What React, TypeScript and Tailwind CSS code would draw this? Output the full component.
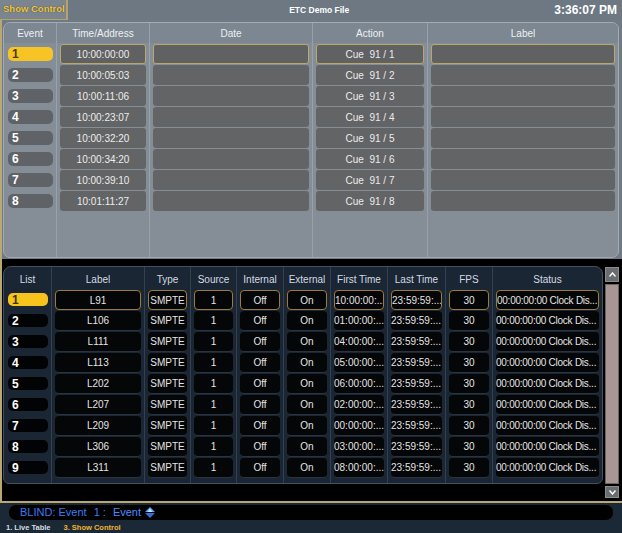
import React from 'react'

const FONT = { fontFamily: '"Liberation Sans", Arial, sans-serif' }

const events = [
  { n: 1, time: '10:00:00:00', action: 'Cue  91 / 1' },
  { n: 2, time: '10:00:05:03', action: 'Cue  91 / 2' },
  { n: 3, time: '10:00:11:06', action: 'Cue  91 / 3' },
  { n: 4, time: '10:00:23:07', action: 'Cue  91 / 4' },
  { n: 5, time: '10:00:32:20', action: 'Cue  91 / 5' },
  { n: 6, time: '10:00:34:20', action: 'Cue  91 / 6' },
  { n: 7, time: '10:00:39:10', action: 'Cue  91 / 7' },
  { n: 8, time: '10:01:11:27', action: 'Cue  91 / 8' },
]

const lists = [
  { n: 1, label: 'L91', first: '10:00:00:...' },
  { n: 2, label: 'L106', first: '01:00:00:...' },
  { n: 3, label: 'L111', first: '04:00:00:...' },
  { n: 4, label: 'L113', first: '05:00:00:...' },
  { n: 5, label: 'L202', first: '06:00:00:...' },
  { n: 6, label: 'L207', first: '02:00:00:...' },
  { n: 7, label: 'L209', first: '00:00:00:...' },
  { n: 8, label: 'L306', first: '03:00:00:...' },
  { n: 9, label: 'L311', first: '08:00:00:...' },
]

const TOP_HEAD = ['Event', 'Time/Address', 'Date', 'Action', 'Label']
const BOTTOM_HEAD = ['List', 'Label', 'Type', 'Source', 'Internal', 'External', 'First Time', 'Last Time', 'FPS', 'Status']

function TopCell({ sel, last, children }: { sel: boolean; last?: boolean; children?: React.ReactNode }) {
  return (
    <div className={`h-[21px] px-[3px] pt-px ${last ? '' : 'border-r border-[#98a1a9]'}`}>
      <div
        className={`h-[20px] flex items-center justify-center text-[10px] text-[#ececec] rounded-[3px] whitespace-pre ${
          sel ? 'bg-[#606163] border border-[#b9a76c]' : 'bg-[#636466]'
        }`}
      >
        {children}
      </div>
    </div>
  )
}

function BotCell({ sel, last, children, className = '' }: { sel: boolean; last?: boolean; children?: React.ReactNode; className?: string }) {
  return (
    <div className={`h-[21px] px-[3px] pt-px ${last ? '' : 'border-r border-[#33414f]'}`}>
      <div
        className={`h-[20px] flex items-center justify-center text-[10px] text-[#e4e4e4] rounded-[4px] bg-[#050607] overflow-hidden whitespace-nowrap ${
          sel ? 'border border-[#9c7b3c]' : 'border-b border-[#2a3440]'
        } ${className}`}
      >
        {children}
      </div>
    </div>
  )
}

export default function App() {
  return (
    <div className="w-[622px] h-[533px] bg-black overflow-hidden flex flex-col select-none" style={FONT}>
      {/* Title bar */}
      <div className="h-[20px] bg-[#6d7883] flex items-center shrink-0">
        <div className="h-full w-[68px] bg-[#7b858f] border-r-2 border-b border-[#b4a36a] flex items-center pl-[3px] whitespace-nowrap">
          <span className="text-[9.5px] font-bold text-[#f0c84a] [text-shadow:0_0_1px_#3a3020]">Show Control</span>
        </div>
        <div className="flex-1 text-center text-[8.5px] font-bold text-white pl-[16px]">ETC Demo File</div>
        <div className="text-[12px] font-bold text-white pr-[5px]">3:36:07 PM</div>
      </div>

      {/* Upper section */}
      <div className="h-[239px] bg-[#6f7a85] border-l-2 border-[#b9a874] pl-px pr-[3px] pt-[2px] pb-px shrink-0">
        <div className="h-full bg-[#858e96] border border-[#a3abb2] rounded-[7px] overflow-hidden grid grid-cols-[53px_93px_163px_115px_1fr] grid-rows-[20px_repeat(8,21px)_1fr]">
          {TOP_HEAD.map((h, i) => (
            <div
              key={h}
              className={`bg-[#7d8791] flex items-center justify-center text-[10px] text-[#eef0f2] ${i < 4 ? 'border-r border-[#98a1a9]' : ''}`}
            >
              {h}
            </div>
          ))}
          {events.map((e) => {
            const sel = e.n === 1
            return (
              <React.Fragment key={e.n}>
                <div className="h-[21px] border-r border-[#98a1a9] pl-[4px] pr-[3px] flex items-center">
                  <div
                    className={`w-full h-[14px] rounded-[5px] flex items-center px-[4px] text-[12px] font-bold leading-none ${
                      sel ? 'bg-[#f6c425] text-[#4b3b05]' : 'bg-[#5f6367] text-white'
                    }`}
                  >
                    {e.n}
                  </div>
                </div>
                <TopCell sel={sel}>{e.time}</TopCell>
                <TopCell sel={sel} />
                <TopCell sel={sel}>{e.action}</TopCell>
                <TopCell sel={sel} last />
              </React.Fragment>
            )
          })}
          {TOP_HEAD.map((h, i) => (
            <div key={h} className={i < 4 ? 'border-r border-[#98a1a9]' : ''} />
          ))}
        </div>
      </div>

      {/* Lower section */}
      <div className="flex-1 border-l-2 border-b-2 border-[#b9a874] flex pl-px pt-[7px] pb-[2px] pr-[3px]">
        <div className="w-[600px] h-[218px] bg-[#1b2634] border border-[#415063] rounded-t-[8px] rounded-b-[6px] overflow-hidden grid grid-cols-[48px_93px_46px_46px_47px_47px_57px_58px_47px_1fr] grid-rows-[22px_repeat(9,21px)_1fr]">
          {BOTTOM_HEAD.map((h, i) => (
            <div
              key={h}
              className={`flex items-center justify-center pt-[2px] text-[10px] text-[#d3dae2] ${i < 9 ? 'border-r border-[#33414f]' : ''}`}
            >
              {h}
            </div>
          ))}
          {lists.map((l) => {
            const sel = l.n === 1
            return (
              <React.Fragment key={l.n}>
                <div className="h-[21px] border-r border-[#33414f] pl-[4px] pr-[3px] flex items-center">
                  <div
                    className={`w-full h-[13px] rounded-[5px] flex items-center px-[4px] text-[12px] font-bold leading-none ${
                      sel ? 'bg-[#f7c31d] text-[#3f3004]' : 'bg-[#020304] text-white'
                    }`}
                  >
                    {l.n}
                  </div>
                </div>
                <BotCell sel={sel}>{l.label}</BotCell>
                <BotCell sel={sel}>SMPTE</BotCell>
                <BotCell sel={sel}>1</BotCell>
                <BotCell sel={sel}>Off</BotCell>
                <BotCell sel={sel}>On</BotCell>
                <BotCell sel={sel} className="justify-start">{l.first}</BotCell>
                <BotCell sel={sel} className="justify-start">23:59:59:...</BotCell>
                <BotCell sel={sel}>30</BotCell>
                <BotCell sel={sel} last className="justify-start tracking-[-0.25px]">00:00:00:00 Clock Dis...</BotCell>
              </React.Fragment>
            )
          })}
          {BOTTOM_HEAD.map((h, i) => (
            <div key={h} className={i < 9 ? 'border-r border-[#33414f]' : ''} />
          ))}
        </div>

        {/* Scrollbar */}
        <div className="w-[14px] ml-[2px] mt-px h-[231px] flex flex-col gap-[2px]">
          <div className="h-[15px] bg-[#6a6d70] border border-[#8a8d90] flex items-center justify-center">
            <svg width="7" height="5" viewBox="0 0 7 5">
              <path d="M0.5 4.5 L3.5 1 L6.5 4.5" fill="none" stroke="#fff" strokeWidth="1.4" />
            </svg>
          </div>
          <div className="flex-1 bg-[#a89695] border border-[#6b6465]" />
          <div className="h-[12px] bg-[#6a6d70] border border-[#8a8d90] flex items-center justify-center">
            <svg width="7" height="5" viewBox="0 0 7 5">
              <path d="M0.5 0.5 L3.5 4 L6.5 0.5" fill="none" stroke="#fff" strokeWidth="1.4" />
            </svg>
          </div>
        </div>
      </div>

      {/* Command line & tabs */}
      <div className="h-[30px] bg-[#1b2937] shrink-0 flex flex-col pt-[2px]">
        <div className="mx-[9px] h-[15px] bg-black rounded-[7px] flex items-center pl-[11px] text-[11px] text-[#3b7cf5] gap-[4px] whitespace-pre">
          <span>BLIND: Event</span>
          <span className="ml-[3px]">1 :</span>
          <span className="ml-[3px] text-[#4a8cff]">Event</span>
          <svg width="10" height="11" viewBox="0 0 10 11">
            <path d="M5 0 L10 5 L0 5 Z" fill="#5aa0ff" />
            <path d="M5 11 L10 6 L0 6 Z" fill="#2f6fe0" />
            <path d="M5 1.5 L7.5 5 L2.5 5 Z" fill="#cfe4ff" />
          </svg>
        </div>
        <div className="flex items-center gap-[13px] pl-[6px] mt-[2px] text-[7.5px] font-bold whitespace-nowrap">
          <span className="text-[#d8dde2]">1. Live Table</span>
          <span className="text-[#f1b52e]">3. Show Control</span>
        </div>
      </div>
    </div>
  )
}
